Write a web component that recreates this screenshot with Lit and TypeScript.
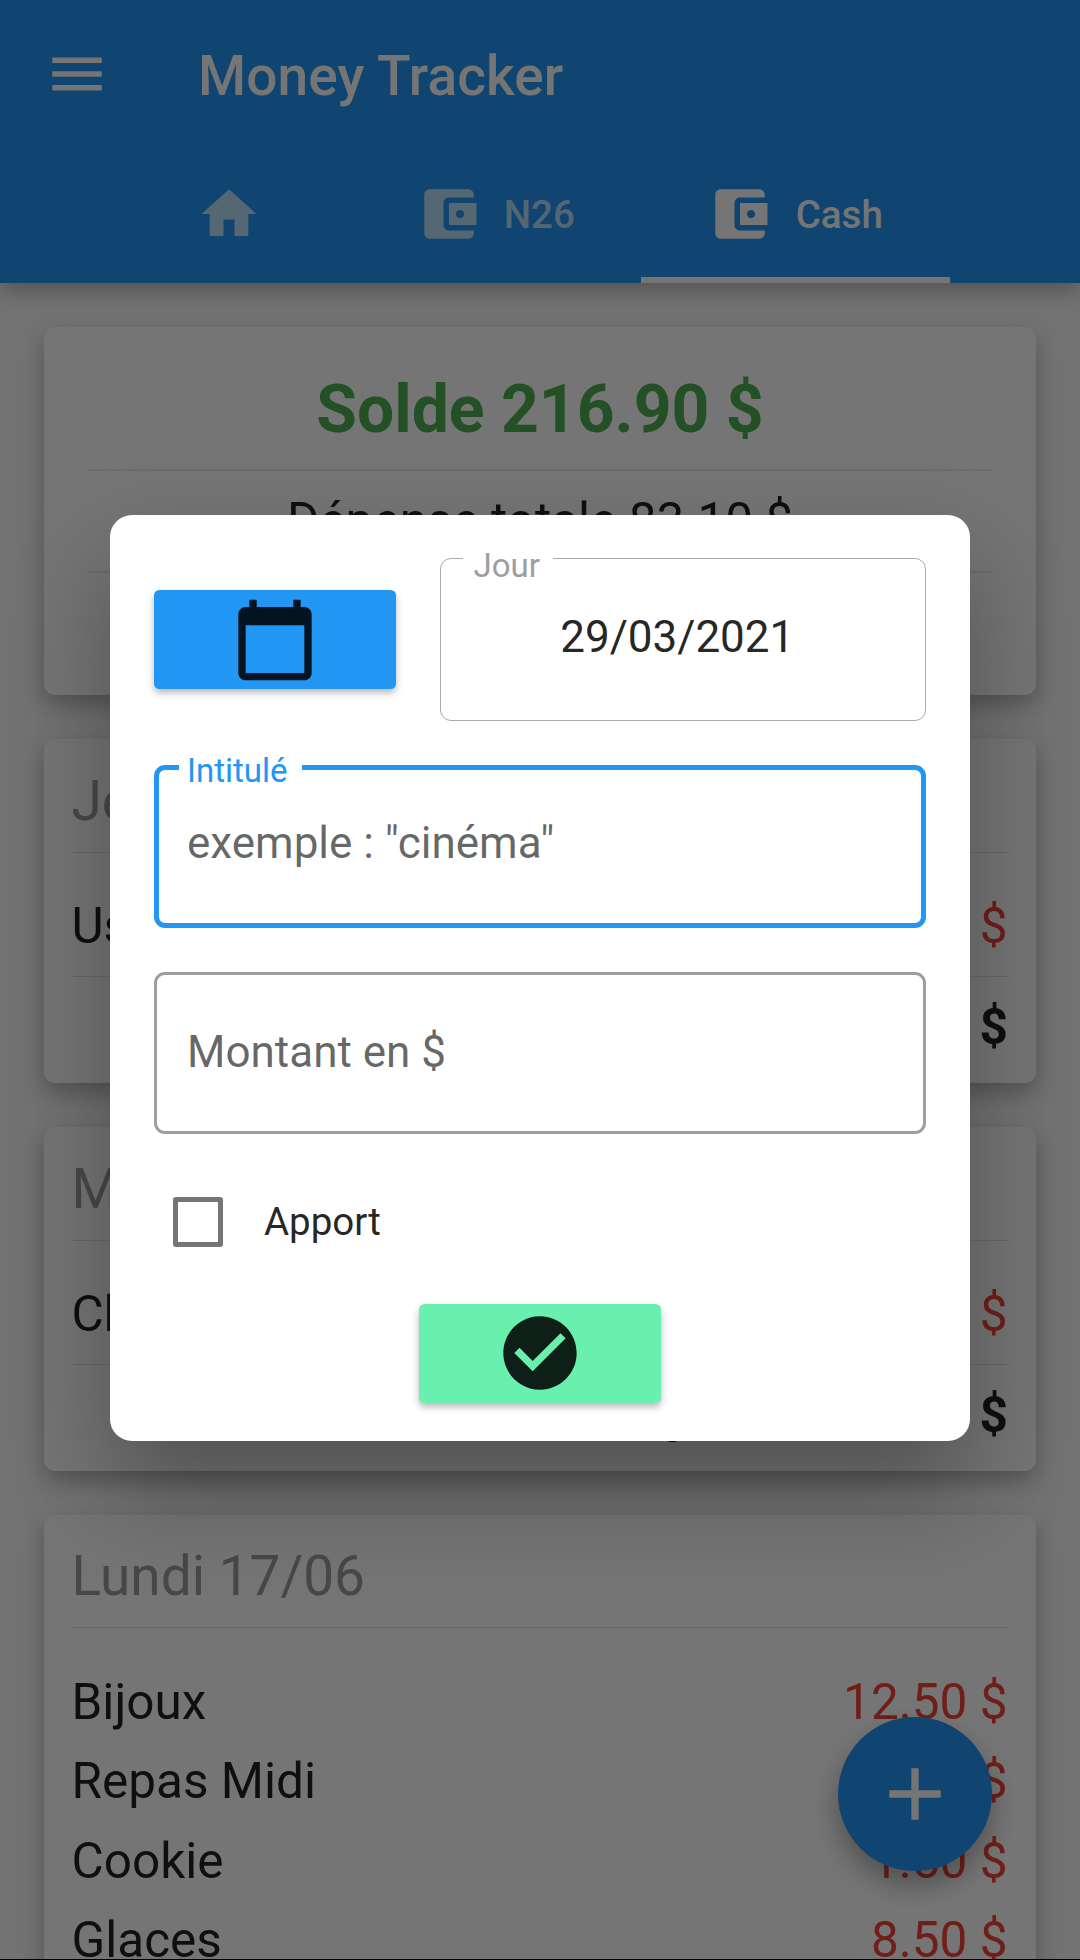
import { LitElement, html, css, svg } from "lit";
import { customElement, property } from "lit/decorators.js";

interface Expense {
  label: string;
  amount: string;
}

interface Day {
  title: string;
  expenses: Expense[];
  total?: string;
}

const days: Day[] = [
  { title: "Jeudi 20/06", expenses: [{ label: "Usb", amount: "19.00 $" }], total: "Dépense : 19.00 $" },
  { title: "Mardi 18/06", expenses: [{ label: "Chocolat", amount: "17.00 $" }], total: "Dépense : 17.00 $" },
  {
    title: "Lundi 17/06",
    expenses: [
      { label: "Bijoux", amount: "12.50 $" },
      { label: "Repas Midi", amount: "7.50 $" },
      { label: "Cookie", amount: "1.50 $" },
      { label: "Glaces", amount: "8.50 $" },
    ],
  },
];

const icons = {
  menu: svg`<path d="M3 18h18v-2H3v2zm0-5h18v-2H3v2zm0-7v2h18V6H3z"/>`,
  home: svg`<path d="M10 20v-6h4v6h5v-8h3L12 3 2 12h3v8z"/>`,
  wallet: svg`<path d="M21 18v1c0 1.1-.9 2-2 2H5c-1.11 0-2-.9-2-2V5c0-1.1.89-2 2-2h14c1.1 0 2 .9 2 2v1h-9c-1.11 0-2 .9-2 2v8c0 1.1.89 2 2 2h9zm-9-2h10V8H12v8zm4-2.5c-.83 0-1.5-.67-1.5-1.5s.67-1.5 1.5-1.5 1.5.67 1.5 1.5-.67 1.5-1.5 1.5z"/>`,
  calendar: svg`<path d="M20 3h-1V1h-2v2H7V1H5v2H4c-1.1 0-2 .9-2 2v16c0 1.1.9 2 2 2h16c1.1 0 2-.9 2-2V5c0-1.1-.9-2-2-2zm0 18H4V8h16v13z"/>`,
  check: svg`<path d="M12 2C6.48 2 2 6.48 2 12s4.48 10 10 10 10-4.48 10-10S17.52 2 12 2zm-2 15l-5-5 1.41-1.41L10 14.17l7.59-7.59L19 8l-9 9z"/>`,
  add: svg`<path d="M19 13h-6v6h-2v-6H5v-2h6V5h2v6h6v2z"/>`,
};

@customElement("app-icon")
export class AppIcon extends LitElement {
  @property() name: keyof typeof icons = "menu";

  static styles = css`
    :host { display: block; width: 66px; height: 66px; flex: none; }
    svg { display: block; width: 100%; height: 100%; fill: currentColor; }
  `;

  render() {
    return html`<svg viewBox="0 0 24 24">${icons[this.name]}</svg>`;
  }
}

@customElement("day-card")
export class DayCard extends LitElement {
  @property({ attribute: false }) day!: Day;

  static styles = css`
    :host {
      display: block;
      box-sizing: border-box;
      background: #fff;
      border-radius: 11px;
      box-shadow: 0 10px 24px rgba(0, 0, 0, 0.28);
      padding: 27.5px 27.5px 0;
      font-size: 49.5px;
      color: rgba(0, 0, 0, 0.87);
      height: 343.75px;
    }
    :host(.open) { height: 520px; }
    .title { font-size: 55px; line-height: 68px; color: #9e9e9e; }
    .divider { height: 1px; background: rgba(0, 0, 0, 0.12); }
    .title + .divider { margin-top: 17px; }
    .list { margin-top: 34.7px; }
    .row { display: flex; justify-content: space-between; line-height: 79.75px; height: 79.5px; padding-right: 1px; }
    .amount { color: #f44336; }
    .list + .divider { margin-top: 9px; }
    .total { text-align: right; font-weight: 700; line-height: 101px; white-space: nowrap; padding-right: 0.5px; }
  `;

  render() {
    return html`
      <div class="title">${this.day.title}</div>
      <div class="divider"></div>
      <div class="list">
        ${this.day.expenses.map(
          (e) => html`<div class="row"><span>${e.label}</span><span class="amount">${e.amount}</span></div>`
        )}
      </div>
      ${this.day.total
        ? html`<div class="divider"></div><div class="total">${this.day.total}</div>`
        : null}
    `;
  }
}

@customElement("expense-dialog")
export class ExpenseDialog extends LitElement {
  static styles = css`
    :host {
      display: flex;
      flex-direction: column;
      box-sizing: border-box;
      width: 860px;
      height: 926.75px;
      padding: 43.5px 44px 0;
      background: #fff;
      border-radius: 22px;
      box-shadow: 0 50px 100px rgba(0, 0, 0, 0.3);
      color: rgba(0, 0, 0, 0.87);
      font-size: 44px;
    }
    .fields { display: flex; flex-direction: column; gap: 44px; }
    .date { display: flex; align-items: center; gap: 43.5px; }
    .button {
      display: flex;
      align-items: center;
      justify-content: center;
      width: 242px;
      height: 99px;
      flex: none;
      border-radius: 5.5px;
      box-shadow: 0 4px 7px rgba(0, 0, 0, 0.28);
    }
    .button app-icon { width: 88px; height: 88px; }
    .pick { background: #2196f3; }
    .confirm { background: #69f0ae; align-self: center; margin-top: 58px; }
    .confirm app-icon { margin-top: -2px; }
    .field {
      position: relative;
      box-sizing: border-box;
      height: 162.75px;
      border-radius: 11px;
      border: 3px solid #9e9e9e;
      padding: 0 30px;
      line-height: 155px;
      color: rgba(0, 0, 0, 0.6);
      white-space: nowrap;
    }
    .field .label {
      position: absolute;
      background: #fff;
      font-size: 33px;
      line-height: 38px;
    }
    .day { flex: 1; border: 1px solid #aaa; text-align: center; color: rgba(0, 0, 0, 0.87); line-height: 157px; padding: 0 11px 0 0; }
    .day .label { left: 22px; top: -12px; width: 79px; padding-left: 11px; color: #9e9e9e; text-align: left; }
    .focused { border: 5px solid #2196f3; line-height: 147px; padding: 0 28px; }
    .focused .label { left: 20px; top: -18px; width: 115px; padding-left: 8px; color: #2196f3; }
    .option { display: flex; align-items: center; margin: 62.5px 0 0 19px; height: 49.5px; font-size: 38.5px; gap: 41px; }
    .box { box-sizing: border-box; width: 50px; height: 50px; border: 5.5px solid #757575; border-radius: 3px; }
  `;

  render() {
    return html`
      <div class="fields">
        <div class="date">
          <div class="button pick"><app-icon name="calendar"></app-icon></div>
          <div class="field day"><span class="label">Jour</span>29/03/2021</div>
        </div>
        <div class="field focused"><span class="label">Intitulé</span>exemple : "cinéma"</div>
        <div class="field">Montant en $</div>
      </div>
      <div class="option"><span class="box"></span><span>Apport</span></div>
      <div class="button confirm"><app-icon name="check"></app-icon></div>
    `;
  }
}

@customElement("app-root")
export class AppRoot extends LitElement {
  static styles = css`
    :host {
      display: block;
      position: relative;
      width: 1080px;
      height: 1960px;
      overflow: hidden;
      background: #fafafa;
      font-family: Roboto, "Liberation Sans", sans-serif;
    }
    .header { background: #2196f3; color: #fff; height: 283px; box-shadow: 0 8px 20px rgba(0, 0, 0, 0.27); }
    .bar { display: flex; align-items: center; height: 148px; padding: 0 44px; gap: 88px; }
    .name { font-size: 55px; font-weight: 500; line-height: 64px; padding-top: 4px; letter-spacing: 0.12px; }
    .tabs { display: flex; height: 135px; padding-left: 107px; }
    .tab {
      box-sizing: border-box;
      display: flex;
      align-items: center;
      justify-content: center;
      gap: 22px;
      width: 243.5px;
      padding-top: 3px;
      border-bottom: 6px solid transparent;
      font-size: 38.5px;
      font-weight: 500;
      color: rgba(255, 255, 255, 0.7);
    }
    .tab.bank { width: 290.5px; padding-right: 1px; }
    .tab.active { width: 308.5px; padding-right: 0.5px; gap: 22.5px; color: #fff; border-color: #fff; }
    .content { display: flex; flex-direction: column; gap: 44px; padding: 44px 44px 0; }
    .summary {
      background: #fff;
      border-radius: 11px;
      height: 368.25px;
      box-sizing: border-box;
      padding: 0 44px;
      text-align: center;
      font-size: 49.5px;
      color: rgba(0, 0, 0, 0.87);
      box-shadow: 0 10px 24px rgba(0, 0, 0, 0.28);
    }
    .balance { padding-top: 23px; line-height: 119px; font-size: 66px; font-weight: 700; color: #4caf50; }
    .divider { height: 2px; background: rgba(0, 0, 0, 0.08); }
    .spent { line-height: 100px; }
    .fab {
      position: absolute;
      left: 838px;
      top: 1717px;
      width: 154px;
      height: 154px;
      border-radius: 50%;
      background: #2196f3;
      color: #fff;
      display: flex;
      align-items: center;
      justify-content: center;
      box-shadow: 0 14px 28px rgba(0, 0, 0, 0.32);
    }
    .fab app-icon { width: 88px; height: 88px; }
    .scrim {
      position: absolute;
      inset: 0;
      box-sizing: border-box;
      display: flex;
      align-items: center;
      justify-content: center;
      padding-bottom: 3px;
      border-bottom: 1px solid #000;
      background: rgba(0, 0, 0, 0.54);
    }
  `;

  render() {
    return html`
      <div class="header">
        <div class="bar">
          <app-icon name="menu"></app-icon>
          <div class="name">Money Tracker</div>
        </div>
        <div class="tabs">
          <div class="tab"><app-icon name="home"></app-icon></div>
          <div class="tab bank"><app-icon name="wallet"></app-icon><span>N26</span></div>
          <div class="tab active"><app-icon name="wallet"></app-icon><span>Cash</span></div>
        </div>
      </div>
      <div class="content">
        <div class="summary">
          <div class="balance">Solde 216.90 $</div>
          <div class="divider"></div>
          <div class="spent">Dépense totale 83.10 $</div>
          <div class="divider"></div>
        </div>
        ${days.map((d) => html`<day-card class=${d.total ? "" : "open"} .day=${d}></day-card>`)}
      </div>
      <div class="fab"><app-icon name="add"></app-icon></div>
      <div class="scrim"><expense-dialog></expense-dialog></div>
    `;
  }
}
